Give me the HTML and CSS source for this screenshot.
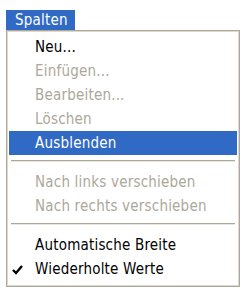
FILE: index.html
```html
<!DOCTYPE html>
<html>
<head>
<meta charset="utf-8">
<link rel="stylesheet" href="styles.css">
</head>
<body>
<div class="menubar"><span class="title">Spalten</span></div>
<div class="menu">
  <div class="item">Neu...</div>
  <div class="item disabled">Einfügen...</div>
  <div class="item disabled">Bearbeiten...</div>
  <div class="item disabled">Löschen</div>
  <div class="item active">Ausblenden</div>
  <div class="sep"></div>
  <div class="item disabled">Nach links verschieben</div>
  <div class="item disabled">Nach rechts verschieben</div>
  <div class="sep"></div>
  <div class="item">Automatische Breite</div>
  <div class="item checked"><svg class="check" width="11" height="10" viewBox="0 0 11 10"><path d="M1 5 L4 8 L10 1" fill="none" stroke="#000" stroke-width="2.4"/></svg>Wiederholte Werte</div>
</div>
</body>
</html>
```
FILE: styles.css
```css
html, body {
  margin: 0;
  padding: 0;
  background: #ffffff;
}
body {
  font-family: "DejaVu Sans Condensed", "DejaVu Sans", sans-serif;
  font-size: 15px;
  padding: 10px 0 0 6px;
}
.menubar {
  display: flex;
}
.title {
  background: #316ac5;
  color: #ffffff;
  height: 20px;
  line-height: 20px;
  padding: 0 7px 0 9px;
  width: 53px;
  letter-spacing: 0.2px;
}
.menu {
  width: 228px;
  border: 1px solid #aca899;
  box-shadow: inset 0 0 0 1px #dcdad0;
  padding: 4px 2px 5px 2px;
  box-sizing: content-box;
}
.item {
  height: 24px;
  line-height: 24px;
  padding-left: 26px;
  color: #000000;
  position: relative;
  white-space: nowrap;
  letter-spacing: 0.2px;
}
.item.disabled {
  color: #aca899;
}
.item.active {
  background: #316ac5;
  color: #ffffff;
}
.sep {
  height: 1px;
  background: #aca899;
  margin: 5px 2px 9px 2px;
  box-shadow: 0 1px 0 #e8e6de;
}
.check {
  position: absolute;
  left: 3px;
  top: 8px;
}
```
